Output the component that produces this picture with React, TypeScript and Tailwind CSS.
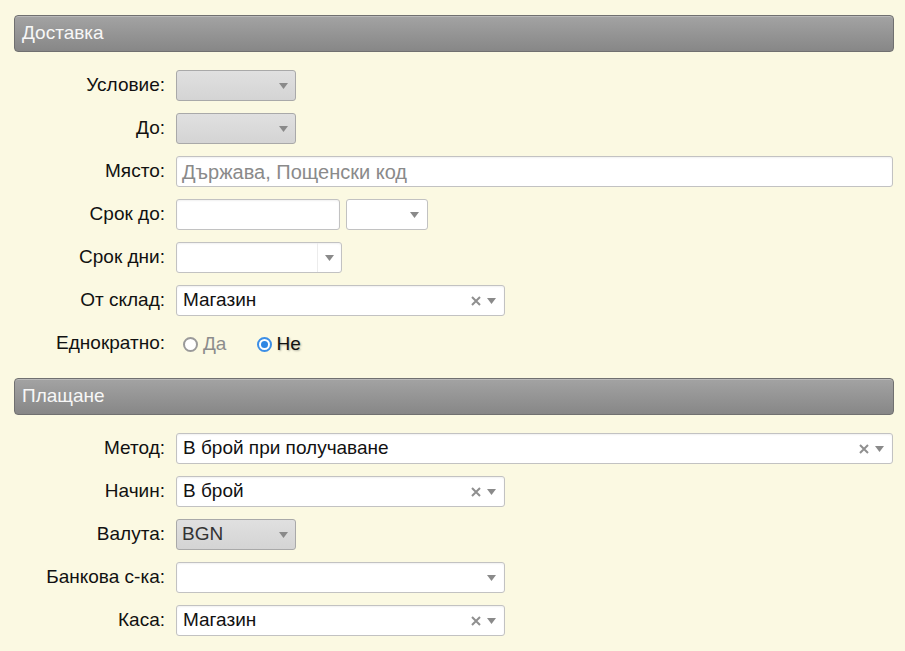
import React from "react";

const Arrow = () => (
  <svg width="9" height="6" viewBox="0 0 9 6" className="shrink-0">
    <path d="M0 0 L9 0 L4.5 6 Z" fill="#8a8a8a" />
  </svg>
);

const Clear = () => (
  <svg width="10" height="10" viewBox="0 0 10 10" className="shrink-0">
    <path d="M1 1 L9 9 M9 1 L1 9" stroke="#8f8f8f" strokeWidth="2" />
  </svg>
);

const Header = ({ title }: { title: string }) => (
  <div className="h-[37px] rounded-[4px] border border-[#707070] bg-gradient-to-b from-[#a3a3a3] to-[#878787] flex items-center pl-[7px] text-[19px] text-[#f7f7f7] shadow-[inset_0_1px_0_rgba(255,255,255,0.25)]">
    {title}
  </div>
);

const Label = ({ children }: { children: React.ReactNode }) => (
  <div className="h-[31px] flex items-center justify-end text-[19px] text-[#111]">{children}</div>
);

const GraySelect = ({ text, w }: { text?: string; w: string }) => (
  <div
    className={`${w} h-[31px] rounded-[3px] border border-[#a9a9a9] bg-gradient-to-b from-[#e0e0e0] to-[#d4d4d4] flex items-center pl-[5px] pr-[7px] text-[19px] text-[#333]`}
  >
    <span className="flex-1">{text}</span>
    <Arrow />
  </div>
);

const WhiteSelect = ({
  text,
  w,
  clear,
}: {
  text?: string;
  w: string;
  clear?: boolean;
}) => (
  <div
    className={`${w} h-[31px] rounded-[3px] border border-[#c2c2c2] bg-white flex items-center pl-[6px] pr-[8px] text-[19px] text-[#111] shadow-[inset_0_1px_2px_rgba(0,0,0,0.06)]`}
  >
    <span className="flex-1">{text}</span>
    {clear && (
      <span className="mr-[6px] flex items-center">
        <Clear />
      </span>
    )}
    <Arrow />
  </div>
);

export default function App() {
  return (
    <div
      className="w-[905px] h-[651px] bg-[#fbf9e2] pt-[15px] pl-[14px] pr-[11px]"
      style={{ fontFamily: '"Liberation Sans", Arial, sans-serif' }}
    >
      <Header title="Доставка" />
      <div className="grid grid-cols-[151px_1fr] gap-x-[11px] gap-y-[12px] mt-[18px] pr-[1px]">
        <Label>Условие:</Label>
        <GraySelect w="w-[120px]" />

        <Label>До:</Label>
        <GraySelect w="w-[120px]" />

        <Label>Място:</Label>
        <div className="h-[31px] rounded-[3px] border border-[#c2c2c2] bg-white flex items-center pl-[5px] text-[20px] text-[#8a8a8a] shadow-[inset_0_1px_2px_rgba(0,0,0,0.06)]">
          Държава, Пощенски код
        </div>

        <Label>Срок до:</Label>
        <div className="flex gap-[6px]">
          <div className="w-[164px] h-[31px] rounded-[3px] border border-[#c2c2c2] bg-white shadow-[inset_0_1px_2px_rgba(0,0,0,0.06)]" />
          <div className="w-[82px] h-[31px] rounded-[3px] border border-[#c2c2c2] bg-white flex items-center justify-end pr-[8px]">
            <Arrow />
          </div>
        </div>

        <Label>Срок дни:</Label>
        <div className="w-[166px] h-[31px] rounded-[3px] border border-[#c2c2c2] bg-white flex items-stretch shadow-[inset_0_1px_2px_rgba(0,0,0,0.06)]">
          <div className="flex-1" />
          <div className="w-[24px] border-l border-[#ececec] flex items-center justify-center">
            <Arrow />
          </div>
        </div>

        <Label>От склад:</Label>
        <WhiteSelect w="w-[329px]" text="Магазин" clear />

        <Label>Еднократно:</Label>
        <div className="h-[31px] flex items-center text-[19px] pl-[7px] pt-[2px]">
          <span className="w-[15px] h-[15px] rounded-full border-[2px] border-[#9a9a9a] bg-white" />
          <span className="ml-[5px] text-[#8c8c8c]">Да</span>
          <span className="ml-[31px] w-[15px] h-[15px] rounded-full border-[2px] border-[#3b8ee6] bg-white flex items-center justify-center">
            <span className="w-[7px] h-[7px] rounded-full bg-[#2f86e3]" />
          </span>
          <span className="ml-[4px] text-[#111] [text-shadow:1px_1px_2px_rgba(0,0,0,0.3)]">Не</span>
        </div>
      </div>

      <div className="mt-[19px]">
        <Header title="Плащане" />
      </div>

      <div className="grid grid-cols-[151px_1fr] gap-x-[11px] gap-y-[12px] mt-[18px] pr-[1px]">
        <Label>Метод:</Label>
        <WhiteSelect w="w-full" text="В брой при получаване" clear />

        <Label>Начин:</Label>
        <WhiteSelect w="w-[329px]" text="В брой" clear />

        <Label>Валута:</Label>
        <GraySelect w="w-[120px]" text="BGN" />

        <Label>Банкова с-ка:</Label>
        <WhiteSelect w="w-[329px]" />

        <Label>Каса:</Label>
        <WhiteSelect w="w-[329px]" text="Магазин" clear />
      </div>
    </div>
  );
}
